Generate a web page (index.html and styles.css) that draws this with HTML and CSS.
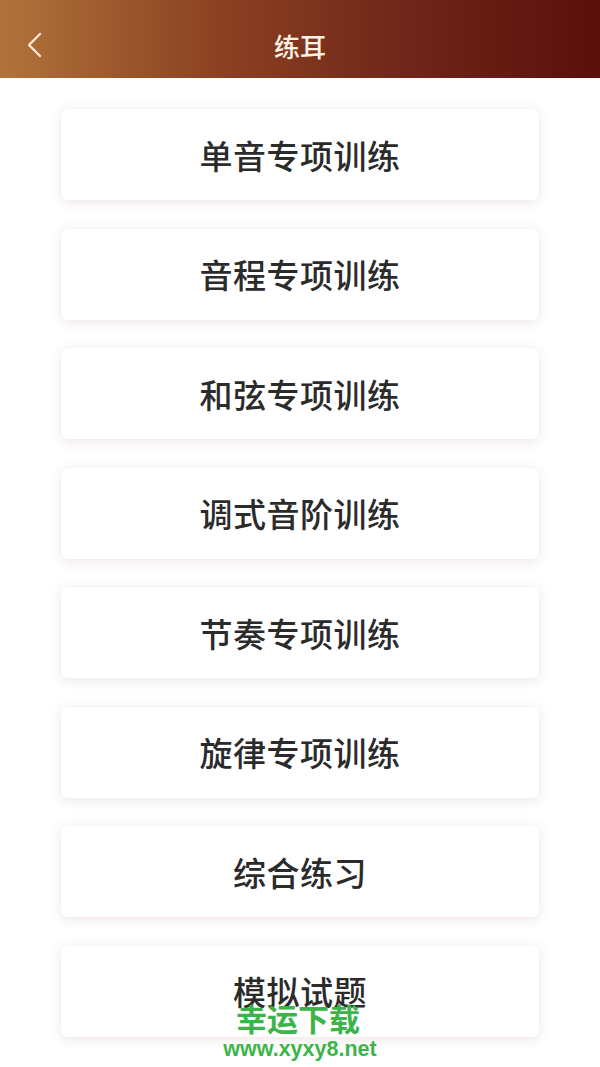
FILE: index.html
```html
<!DOCTYPE html>
<html lang="zh-CN">
<head>
    <meta charset="UTF-8">
    <meta name="viewport" content="width=device-width, initial-scale=1.0">
    <title>练耳</title>
    <link rel="stylesheet" href="styles.css">
</head>
<body>
    <div id="page">
        <!-- Top bar -->
        <div id="topBar">
            <div class="backBtn">
                <svg width="16" height="26" viewBox="0 0 16 26">
                    <path d="M14 2 L3 13 L14 24" fill="none" stroke="#fbe9d6" stroke-width="2.4" stroke-linecap="round" stroke-linejoin="round"/>
                </svg>
            </div>
            <div class="barTitle">练耳</div>
            <div class="barSpacer"></div>
        </div>

        <!-- Practice list -->
        <div id="menuList">
            <div class="menuItem">单音专项训练</div>
            <div class="menuItem">音程专项训练</div>
            <div class="menuItem">和弦专项训练</div>
            <div class="menuItem">调式音阶训练</div>
            <div class="menuItem">节奏专项训练</div>
            <div class="menuItem">旋律专项训练</div>
            <div class="menuItem">综合练习</div>
            <div class="menuItem">模拟试题</div>
        </div>

        <!-- Watermark (lies over the last card) -->
        <div id="watermark">
            <div class="wmName">幸运下载</div>
            <div class="wmUrl">www.xyxy8.net</div>
        </div>
    </div>
</body>
</html>
```

FILE: styles.css
```css
body {
    margin: 0;
    background: #ffffff;
    font-family: "Noto Sans CJK SC", "Noto Sans", sans-serif;
}

#page {
    position: relative;
    width: 600px;
    height: 1067px;
    overflow: hidden;
}

#topBar {
    display: flex;
    align-items: center;
    height: 78px;
    padding: 12px 20px 0 20px;
    box-sizing: border-box;
    background: linear-gradient(90deg, #b1733b 0%, #8c4322 35%, #6e2418 70%, #5a100a 100%);
}

.backBtn {
    width: 40px;
    display: flex;
    align-items: center;
    padding-left: 6px;
}

.barTitle {
    flex: 1;
    text-align: center;
    color: #fdf1e3;
    font-size: 26px;
    font-weight: 500;
    margin-right: 6px;
}

.barSpacer {
    width: 40px;
}

#menuList {
    display: flex;
    flex-direction: column;
    gap: 28.5px;
    padding: 31px 61px 0 61px;
}

.menuItem {
    height: 91px;
    display: flex;
    align-items: center;
    justify-content: center;
    background: #ffffff;
    border-radius: 7px;
    box-shadow: 0 2px 12px rgba(140, 80, 80, 0.16);
    color: #2b2b2b;
    font-size: 33px;
    font-weight: 500;
    letter-spacing: 0.5px;
}

#watermark {
    position: absolute;
    left: 0;
    right: 0;
    top: 1002px;
    text-align: center;
    color: #3cb449;
    font-weight: bold;
}

.wmName {
    font-size: 31px;
    line-height: 32px;
    margin-left: -4px;
}

.wmUrl {
    font-family: "Liberation Sans", Arial, sans-serif;
    font-size: 21.5px;
    line-height: 22px;
    margin-top: 4px;
}
```
